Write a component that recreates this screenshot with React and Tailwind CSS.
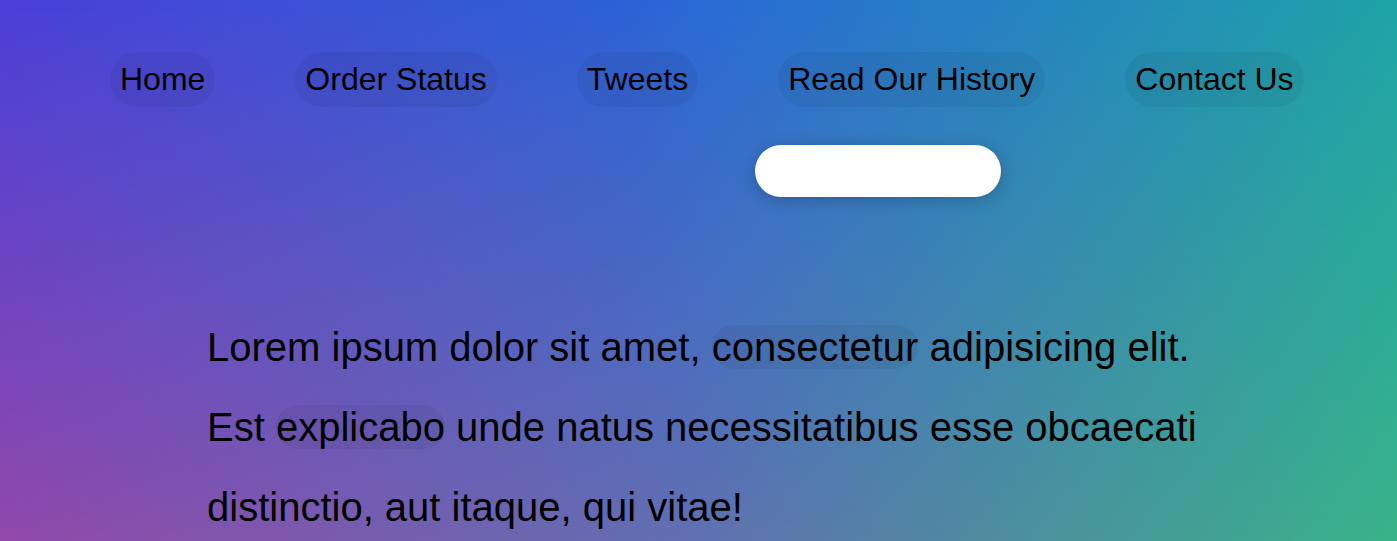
export default function App() {
  const items = ["Home", "Order Status", "Tweets", "Read Our History", "Contact Us"];
  return (
    <div className="grid grid-rows-[100%] grid-cols-1 h-screen overflow-hidden font-['Liberation_Sans',Arial,sans-serif] text-black">
      <div className="col-start-1 row-start-1 bg-[linear-gradient(to_right,#4a40d8,#2d62d6_45%,#2a6ad6_50%,#1fa3a8)]" />
      <div className="col-start-1 row-start-1 bg-[linear-gradient(to_right,#9248aa,#6070b0_50%,#38b388)] [mask-image:linear-gradient(to_bottom,transparent,black)]" />
      <div className="relative z-10 col-start-1 row-start-1">
        <nav className="flex gap-[80px] pl-[110px] pt-[52px]">
          {items.map((t) => (
            <a key={t} className="flex h-[55px] shrink-0 items-center rounded-full bg-black/5 px-[10px] text-[32px] leading-[37px] whitespace-nowrap">
              {t}
            </a>
          ))}
        </nav>
        <div className="ml-[755px] mt-[38px] h-[52px] w-[246px] rounded-full bg-white shadow-[0_3px_16px_rgba(0,0,0,0.22)]" />
        <p className="ml-[207px] mt-[110px] w-[1000px] text-[40px] leading-[80px]">
          Lorem ipsum dolor sit amet,{" "}
          <span className="rounded-full bg-black/5">consectetur</span> adipisicing elit. Est{" "}
          <span className="rounded-full bg-black/5">explicabo</span> unde natus necessitatibus esse obcaecati
          distinctio, aut itaque, qui vitae!
        </p>
      </div>
    </div>
  );
}
